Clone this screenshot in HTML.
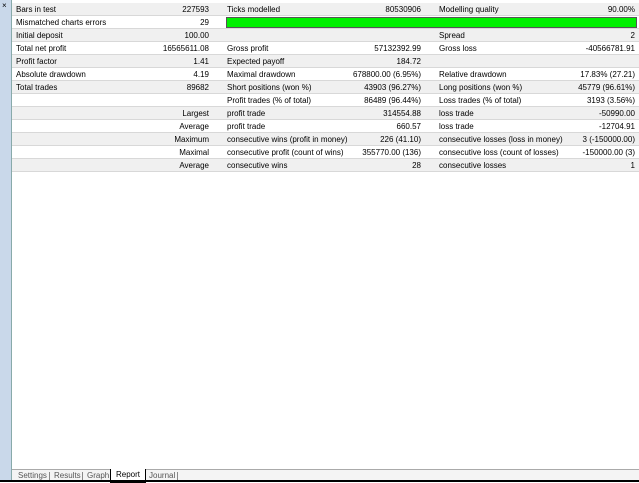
<!DOCTYPE html><html><head><style>
body{margin:0;width:639px;height:482px;background:#fff;position:relative;overflow:hidden;font-family:"Liberation Sans",sans-serif;font-size:8px;color:#000}
.side{position:absolute;left:0;top:0;width:11px;height:482px;background:#c9d8ea;border-right:1px solid #8aa}
.row{position:absolute;left:12px;width:627px;height:12px;border-bottom:1px solid #d8d8d8}
.row span{position:absolute;top:2px;white-space:nowrap}
.r{text-align:right}
.tabs{position:absolute;left:12px;top:469px;width:627px;height:11px;border-top:1px solid #aaa;background:#f4f4f4}
.tabs span{position:absolute;top:1px;color:#555}
.sep{position:absolute;top:2px;width:1px;height:8px;background:#888}
</style></head><body>
<div class="side"></div>
<div style="position:absolute;left:2px;top:1px;font-size:8px">×</div>
<div style="position:absolute;left:210px;top:3px;width:1px;height:166px;background:#d8d8d8"></div>
<div style="position:absolute;left:423px;top:3px;width:1px;height:166px;background:#d8d8d8"></div>
<div id="rows"></div>
<div class="tabs">
<span style="left:6px">Settings</span><div class="sep" style="left:37px"></div><span style="left:42px">Results</span><div class="sep" style="left:70px"></div><span style="left:75px">Graph</span>
<span style="left:98px;top:-1px;height:11px;border:1px solid #000;border-top:none;background:#fff;color:#000;padding:1px 5px">Report</span>
<span style="left:137px">Journal</span><div class="sep" style="left:165px"></div></div>
<div style="position:absolute;left:0;top:480px;width:639px;height:2px;background:#000"></div>
<script>
var d=[
["Bars in test","227593","Ticks modelled","80530906","Modelling quality","90.00%"],
["Mismatched charts errors","29","","","",""],
["Initial deposit","100.00","","","Spread","2"],
["Total net profit","16565611.08","Gross profit","57132392.99","Gross loss","-40566781.91"],
["Profit factor","1.41","Expected payoff","184.72","",""],
["Absolute drawdown","4.19","Maximal drawdown","678800.00 (6.95%)","Relative drawdown","17.83% (27.21)"],
["Total trades","89682","Short positions (won %)","43903 (96.27%)","Long positions (won %)","45779 (96.61%)"],
["","","Profit trades (% of total)","86489 (96.44%)","Loss trades (% of total)","3193 (3.56%)"],
["","Largest","profit trade","314554.88","loss trade","-50990.00"],
["","Average","profit trade","660.57","loss trade","-12704.91"],
["","Maximum","consecutive wins (profit in money)","226 (41.10)","consecutive losses (loss in money)","3 (-150000.00)"],
["","Maximal","consecutive profit (count of wins)","355770.00 (136)","consecutive loss (count of losses)","-150000.00 (3)"],
["","Average","consecutive wins","28","consecutive losses","1"]];
var h="";d.forEach(function(r,i){var bg=(i%2==0)?"#f0f0f0":"#fff";
h+='<div class="row" style="top:'+(3+i*13)+'px;background:'+bg+'">'+
'<span style="left:4px">'+r[0]+'</span><span class="r" style="right:430px">'+r[1]+'</span>'+
'<span style="left:215px">'+r[2]+'</span><span class="r" style="right:218px">'+r[3]+'</span>'+
'<span style="left:427px">'+r[4]+'</span><span class="r" style="right:4px">'+r[5]+'</span>'+
(i==1?'<div style="position:absolute;z-index:2;left:214px;top:1px;width:409px;height:9px;background:#00f000;border:1px solid #555"></div>':'')+'</div>';});
document.getElementById("rows").innerHTML=h;
</script>
</body></html>
